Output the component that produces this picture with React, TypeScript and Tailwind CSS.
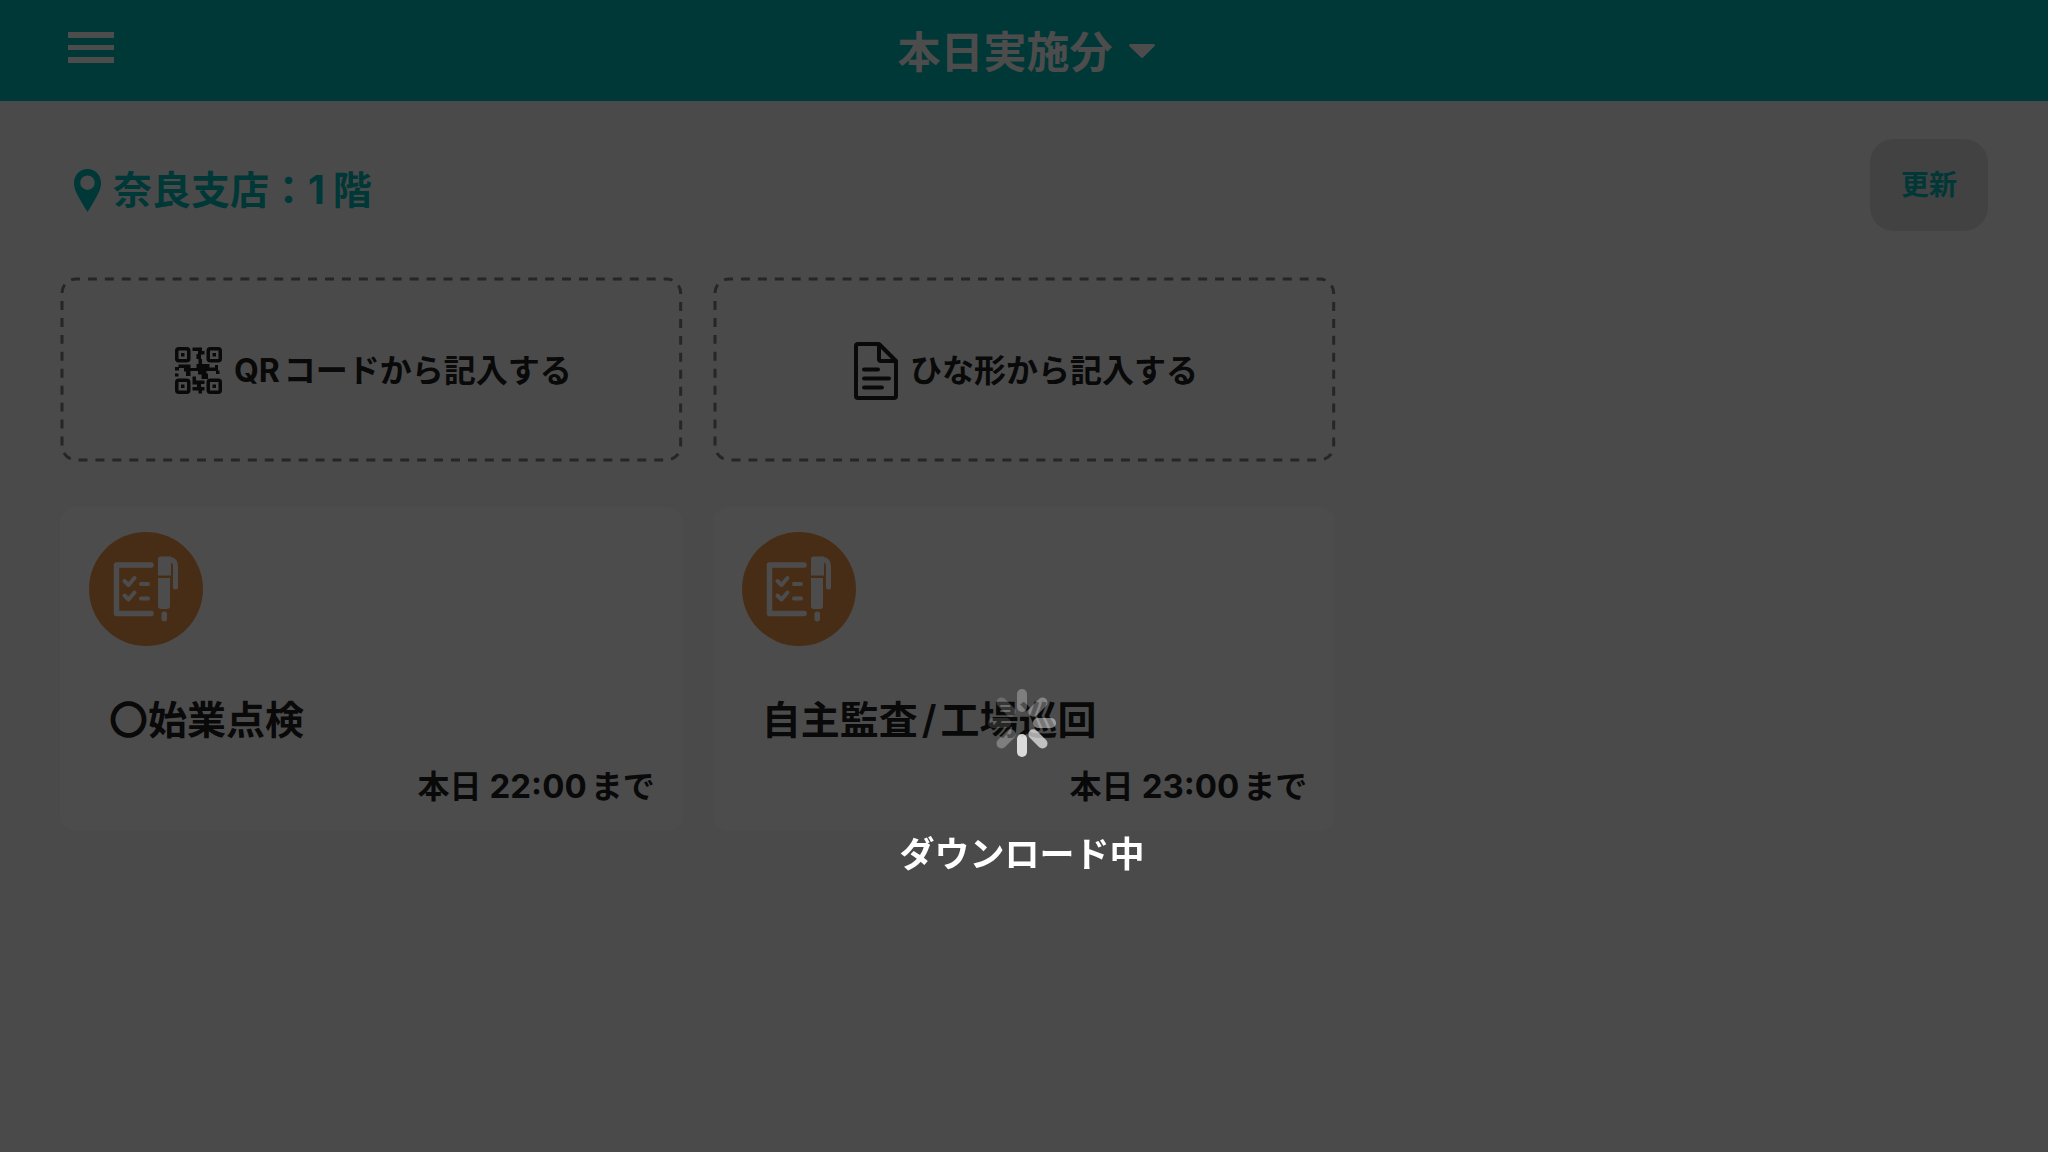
import React from "react";

const FONT = "font-['Inter','Noto_Sans_CJK_JP',sans-serif]";

function MenuIcon() {
  return (
    <svg viewBox="0 0 46 32" className="h-8 w-[46px]" fill="currentColor" aria-hidden="true">
      <rect y="0" width="46" height="6" />
      <rect y="13" width="46" height="5" />
      <rect y="25" width="46" height="6" />
    </svg>
  );
}

function PinIcon() {
  return (
    <svg viewBox="0 0 27 43" className="h-[43px] w-[27px]" fill="currentColor" fillRule="evenodd" aria-hidden="true">
      <path d="M13.500 0C6 0 0 6 0 14c0 6 3 11 6 16.500 2.500 4.500 5 8.500 7.500 12.500 2.500-4 5-8 7.500-12.500C24 25 27 20 27 14 27 6 21 0 13.500 0Zm0 6.500a7.200 7.200 0 1 1 0 14.400 7.200 7.200 0 0 1 0-14.400Z" />
    </svg>
  );
}

function QrIcon() {
  const corners = [
    [0, 0],
    [31.5, 0],
    [0, 31.5],
    [31.5, 31.5],
  ];
  return (
    <svg viewBox="0 0 47 47" className="h-[47px] w-[47px]" fill="currentColor" aria-hidden="true">
      {corners.map(([x, y]) => (
        <g key={`${x}-${y}`}>
          <rect x={x + 1.75} y={y + 1.75} width="12" height="12" rx="2" fill="none" stroke="currentColor" strokeWidth="3.500" />
          <rect x={x + 6} y={y + 6} width="3.500" height="3.500" />
        </g>
      ))}
      <path d="M17.500 0.500H27V4h2.500v3.500H26V12h-4.500V7H23V4h-5.500ZM23.500 12H27v5h7.500v3.500H40V18h3v5.500h1.500V27H41v-3h-9.500v2.500H33V32h-6.500v-4.500H23V24h-7.500v5H11v-4.500H9V21H4v2.500H0V20h3.500v-2.500h12V21h6v-4h2ZM0 26.500h3.500v3H0Z" />
      <path d="M17.500 29.500h3.500v4h8.500V37H26v3h3.500v3.500H27v3h-3.500v-3h-6V40H22v-2.500h-4.500Z" />
    </svg>
  );
}

function DocumentIcon() {
  return (
    <svg viewBox="0 0 44 58" className="h-[58px] w-11" fill="none" stroke="currentColor" strokeWidth="4" strokeLinecap="round" strokeLinejoin="round" aria-hidden="true">
      <path d="M4 2h21l17 17v35a2 2 0 0 1-2 2H4a2 2 0 0 1-2-2V4a2 2 0 0 1 2-2Z" />
      <path d="M25 3v14a2 2 0 0 0 2 2h14M10 27.500h14M10 36.500h25M10 45.500h18" />
    </svg>
  );
}

function ChecklistIcon() {
  return (
    <svg viewBox="0 0 114 114" className="size-[114px]" aria-hidden="true">
      <circle cx="57" cy="57" r="57" fill="#f0964b" />
      <g fill="none" stroke="#fff" strokeLinecap="round" strokeLinejoin="round">
        <path d="M62 33H27.500v48.500H62" strokeWidth="5.500" />
        <path d="m35.500 49 4 4 6-7M35.500 63.500l4 4 6-7" strokeWidth="4" />
        <path d="M52 52h7M52 66.500h7" strokeWidth="4" />
        <path d="M80 27.500c5 0 6.500 3 6.500 7V55" strokeWidth="5" />
      </g>
      <g fill="#fff">
        <path d="M71.500 24.500H82V43.500H69V27a2.500 2.500 0 0 1 2.500-2.500Z" />
        <path d="M69 46h12v28a3 3 0 0 1-3 3h-6a3 3 0 0 1-3-3Z" />
        <rect x="72.500" y="79.500" width="5.500" height="10" rx="2.700" />
      </g>
    </svg>
  );
}

function EntryButton({ icon, children }: { icon: React.ReactNode; children: React.ReactNode }) {
  return (
    <button type="button" className="relative flex h-[185px] items-center justify-center gap-3 pt-0.5 pl-1 text-[32px] font-semibold">
      <svg className="absolute inset-0.5 h-[calc(100%-4px)] w-[calc(100%-4px)] overflow-visible" aria-hidden="true">
        <rect width="100%" height="100%" rx="14" fill="none" stroke="#7f7f7f" strokeWidth="3" pathLength="1581" strokeDasharray="9 8" strokeDashoffset="5" />
      </svg>
      {icon}
      <span>{children}</span>
    </button>
  );
}

function TaskCard({ title, time }: { title: React.ReactNode; time: string }) {
  return (
    <article className="flex h-[324px] flex-col rounded-2xl bg-white pt-[25px] pr-7 pl-[29px]">
      <ChecklistIcon />
      <h2 className="mt-[46px] pl-5 text-[39px] leading-[56px] font-semibold">{title}</h2>
      <p className="mt-[18px] text-right text-[32px] leading-10 font-semibold">
        本日 <span className="mr-1 text-[33px] font-bold">{time}</span>まで
      </p>
    </article>
  );
}

function Spinner() {
  const blades = [0.28, 0.32, 0.45, 0.65, 0.8, 0.28, 0.12, 0.18];
  return (
    <svg viewBox="-34 -34 68 68" className="size-[68px]" aria-hidden="true">
      {blades.map((opacity, i) => (
        <rect key={i} x="-5" y="-34" width="10" height="23" rx="5" fill="#fff" opacity={opacity} transform={`rotate(${i * 45})`} />
      ))}
    </svg>
  );
}

export default function App() {
  return (
    <div className={`${FONT} min-h-screen bg-[#f7f7f7] text-[#212121]`} lang="ja">
      <header className="grid h-[101px] grid-cols-[1fr_auto_1fr] items-center bg-[#00b9b7] px-[68px] text-white">
        <button type="button" aria-label="メニュー" className="mb-1.5 justify-self-start">
          <MenuIcon />
        </button>
        <button type="button" className="flex items-center gap-4 pt-0.5 pl-1 text-[43px] leading-[60px] font-semibold">
          本日実施分
          <svg viewBox="0 0 26 14" className="mb-0.5 h-3.5 w-[26px]" fill="currentColor" aria-hidden="true">
            <path d="M1.500 0h23a1.300 1.300 0 0 1 1 2.200L14.300 13.300a1.800 1.800 0 0 1-2.600 0L.500 2.200A1.300 1.300 0 0 1 1.500 0Z" />
          </svg>
        </button>
      </header>

      <main className="px-[60px] pt-[38px]">
        <div className="flex items-start justify-between">
          <h1 className="flex items-center gap-3 pt-6 pl-3.5 text-[39px] leading-[54px] font-semibold text-[#00b9b7]">
            <PinIcon />
            <span>
              奈良支店：<span className="mr-2 font-bold">1</span>階
            </span>
          </h1>
          <button type="button" className="h-[92px] w-[118px] rounded-3xl bg-[#dedede] text-[28px] font-semibold text-[#00b9b7]">
            更新
          </button>
        </div>

        <div className="mt-[46px] grid grid-cols-3 gap-x-[30px] gap-y-[45px]">
          <EntryButton icon={<QrIcon />}>
            <span className="mr-1 font-bold">QR</span>コードから記入する
          </EntryButton>
          <EntryButton icon={<DocumentIcon />}>ひな形から記入する</EntryButton>
          <div />
          <TaskCard title="〇始業点検" time="22:00" />
          <TaskCard
            title={
              <>
                自主監査<span className="mx-1">/</span>工場巡回
              </>
            }
            time="23:00"
          />
        </div>
      </main>

      <div role="status" className="fixed inset-0 flex flex-col items-center justify-center gap-[70px] bg-black/70 pt-[417px] pr-1 text-white">
        <Spinner />
        <p className="text-[35px] leading-[54px] font-semibold">ダウンロード中</p>
      </div>
    </div>
  );
}
